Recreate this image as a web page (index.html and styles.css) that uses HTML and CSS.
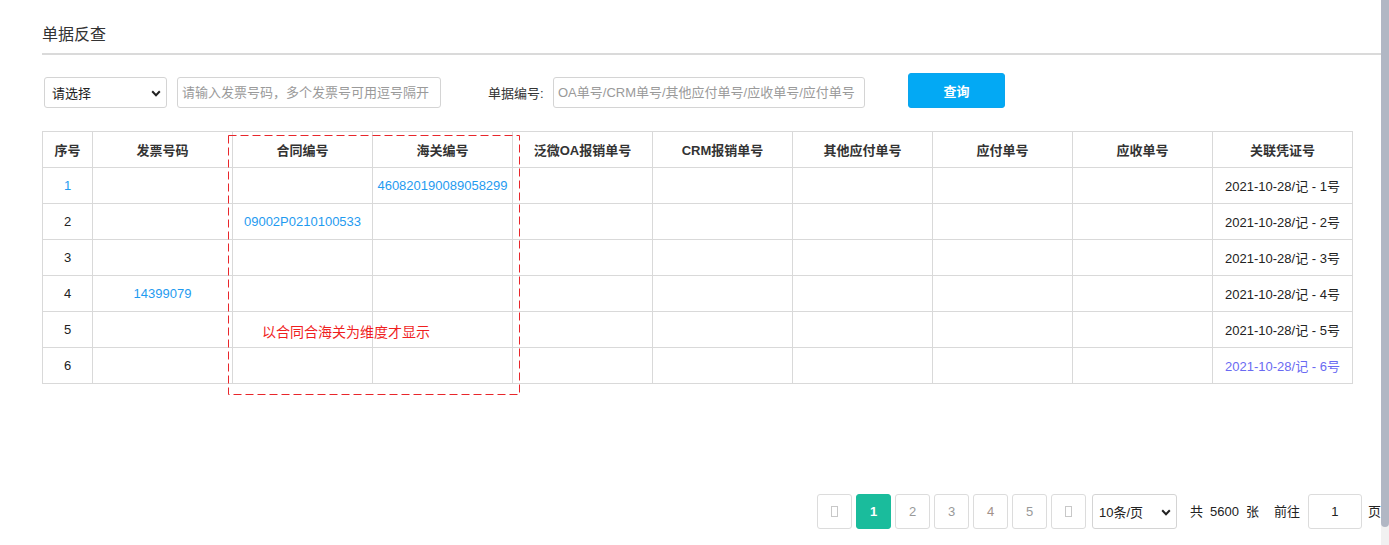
FILE: index.html
```html
<!DOCTYPE html>
<html lang="zh">
<head>
<meta charset="utf-8">
<title>单据反查</title>
<link rel="stylesheet" href="styles.css">
</head>
<body>
<div class="viewport">
  <div class="page">
    <div class="title">单据反查</div>

    <div class="filters">
      <div class="select-box sel-type">
        <span>请选择</span>
        <svg class="chev" width="10" height="7" viewBox="0 0 10 7"><path d="M1.2 1.3 L5 5.2 L8.8 1.3" fill="none" stroke="#222" stroke-width="2"/></svg>
      </div>
      <input class="text-input inv-input" type="text" placeholder="请输入发票号码，多个发票号可用逗号隔开">
      <label class="field-label">单据编号:</label>
      <input class="text-input doc-input" type="text" placeholder="OA单号/CRM单号/其他应付单号/应收单号/应付单号">
      <button class="btn-query">查询</button>
    </div>

    <div class="table-wrap">
      <table class="grid">
        <colgroup>
          <col class="c-idx"><col><col><col><col><col><col><col><col><col>
        </colgroup>
        <thead>
          <tr>
            <th>序号</th><th>发票号码</th><th>合同编号</th><th>海关编号</th><th>泛微OA报销单号</th><th>CRM报销单号</th><th>其他应付单号</th><th>应付单号</th><th>应收单号</th><th>关联凭证号</th>
          </tr>
        </thead>
        <tbody>
          <tr><td class="link">1</td><td></td><td></td><td class="link">460820190089058299</td><td></td><td></td><td></td><td></td><td></td><td>2021-10-28/记 - 1号</td></tr>
          <tr><td>2</td><td></td><td class="link">09002P0210100533</td><td></td><td></td><td></td><td></td><td></td><td></td><td>2021-10-28/记 - 2号</td></tr>
          <tr><td>3</td><td></td><td></td><td></td><td></td><td></td><td></td><td></td><td></td><td>2021-10-28/记 - 3号</td></tr>
          <tr><td>4</td><td class="link">14399079</td><td></td><td></td><td></td><td></td><td></td><td></td><td></td><td>2021-10-28/记 - 4号</td></tr>
          <tr><td>5</td><td></td><td></td><td></td><td></td><td></td><td></td><td></td><td></td><td>2021-10-28/记 - 5号</td></tr>
          <tr><td>6</td><td></td><td></td><td></td><td></td><td></td><td></td><td></td><td></td><td class="visited">2021-10-28/记 - 6号</td></tr>
        </tbody>
      </table>
      <svg class="dash-box" width="293" height="261" viewBox="0 0 293 261"><rect x="0.5" y="0.5" width="291" height="259" fill="none" stroke="#e8262b" stroke-width="1" stroke-dasharray="8 4"/></svg>
      <div class="note">以合同合海关为维度才显示</div>
    </div>

    <div class="pager">
      <button class="pg pg-nav"><span class="tofu"></span></button>
      <button class="pg active">1</button>
      <button class="pg">2</button>
      <button class="pg">3</button>
      <button class="pg pg-4">4</button>
      <button class="pg">5</button>
      <button class="pg pg-nav"><span class="tofu"></span></button>
      <div class="select-box sel-size">
        <span>10条/页</span>
        <svg class="chev" width="10" height="7" viewBox="0 0 10 7"><path d="M1.2 1.3 L5 5.2 L8.8 1.3" fill="none" stroke="#222" stroke-width="2"/></svg>
      </div>
      <div class="total"><span>共</span><span>5600</span><span>张</span></div>
      <span class="goto">前往</span>
      <input class="goto-input" type="text" value="1">
      <span class="goto-unit">页</span>
    </div>
  </div>
  <div class="scrollbar"><div class="thumb"></div></div>
</div>
</body>
</html>
```

FILE: styles.css
```css
* { box-sizing: border-box; }

html, body {
  margin: 0;
  padding: 0;
  background: #fff;
  overflow: hidden;
}

body {
  font-family: "Liberation Sans", "Noto Sans CJK SC", sans-serif;
  font-size: 13px;
  color: #333;
}

.viewport {
  display: flex;
  width: 1389px;
  height: 545px;
  overflow: hidden;
}

.page {
  flex: 0 0 1381px;
  width: 1381px;
  height: 545px;
  overflow: hidden;
  padding: 24px 0 0 42px;
}

.scrollbar {
  flex: 0 0 8px;
  height: 545px;
  background: #f1f1f1;
}

.thumb {
  height: 527px;
  background: #b1b7c4;
  border-radius: 0 0 4px 4px;
}

.title {
  font-size: 16px;
  line-height: 22px;
  color: #333;
  padding-bottom: 7px;
  border-bottom: 2px solid #dadada;
}

.filters {
  display: flex;
  align-items: flex-end;
  margin-top: 18px;
  padding-left: 2px;
}

.select-box {
  position: relative;
  display: flex;
  align-items: center;
  height: 31px;
  border: 1px solid #d4d4d4;
  border-radius: 3px;
  background: #fff;
  color: #222;
  font-size: 13px;
}

.select-box .chev {
  position: absolute;
  right: 5px;
  top: 50%;
  margin-top: -3px;
}

.sel-type {
  width: 123px;
  padding-left: 7px;
}

.text-input {
  height: 31px;
  border: 1px solid #d4d4d4;
  border-radius: 3px;
  padding: 0 4px;
  font-family: inherit;
  font-size: 13px;
  color: #333;
  outline: none;
}

.text-input::placeholder {
  color: #9a9a9a;
}

.inv-input {
  width: 264px;
  margin-left: 10px;
}

.field-label {
  width: 65px;
  margin-left: 47px;
  height: 31px;
  line-height: 33px;
  font-size: 13px;
  color: #333;
}

.doc-input {
  width: 312px;
}

.btn-query {
  width: 97px;
  height: 35px;
  margin-left: 43px;
  border: 1px solid #0aa5ee;
  border-radius: 3px;
  background: #03a9f4;
  color: #fff;
  font-family: inherit;
  font-size: 13px;
  font-weight: bold;
  padding: 0;
}

.table-wrap {
  position: relative;
  width: 1310px;
  margin-top: 23px;
}

.grid {
  width: 1310px;
  border-collapse: collapse;
  table-layout: fixed;
}

.grid col { width: 140px; }
.grid col.c-idx { width: 50px; }

.grid th,
.grid td {
  height: 36px;
  padding: 0;
  border: 1px solid #d9d9d9;
  text-align: center;
  vertical-align: middle;
  font-size: 13px;
  white-space: nowrap;
}

.grid th {
  font-weight: bold;
  color: #333;
}

.grid td {
  color: #222;
}

.grid td.link {
  color: #1f9bf0;
}

.grid td.visited {
  color: #6a6af2;
}

.dash-box {
  position: absolute;
  left: 186px;
  top: 4px;
}

.note {
  position: absolute;
  left: 220px;
  top: 193px;
  font-size: 14px;
  line-height: 16px;
  color: #f01f1f;
  white-space: nowrap;
}

.pager {
  display: flex;
  align-items: center;
  justify-content: flex-end;
  margin-top: 110px;
  height: 35px;
}

.pg {
  width: 35px;
  height: 35px;
  margin-left: 4px;
  padding: 0;
  border: 1px solid #dcdcdc;
  border-radius: 3px;
  background: #fff;
  color: #999;
  font-family: inherit;
  font-size: 13px;
  display: flex;
  align-items: center;
  justify-content: center;
}

.pg:first-child { margin-left: 0; }

.pg.active {
  background: #1abc9c;
  border-color: #1abc9c;
  color: #fff;
  font-weight: bold;
}

.pg-4 { color: #a3928a; }

.tofu {
  display: block;
  width: 7px;
  height: 11px;
  border: 1px solid #c8c8c8;
}

.sel-size {
  width: 85px;
  height: 35px;
  margin-left: 6px;
  padding-left: 6px;
}

.total {
  display: flex;
  align-items: center;
  gap: 7px;
  margin-left: 13px;
  color: #222;
  line-height: 16px;
}

.total span {
  display: block;
}

.goto {
  margin-left: 15px;
  color: #222;
  line-height: 16px;
}

.goto-input {
  width: 54px;
  height: 35px;
  margin-left: 8px;
  border: 1px solid #dcdcdc;
  border-radius: 3px;
  text-align: center;
  font-family: inherit;
  font-size: 13px;
  color: #222;
  outline: none;
  padding: 0;
}

.goto-unit {
  margin-left: 6px;
  color: #222;
  line-height: 16px;
}
```
